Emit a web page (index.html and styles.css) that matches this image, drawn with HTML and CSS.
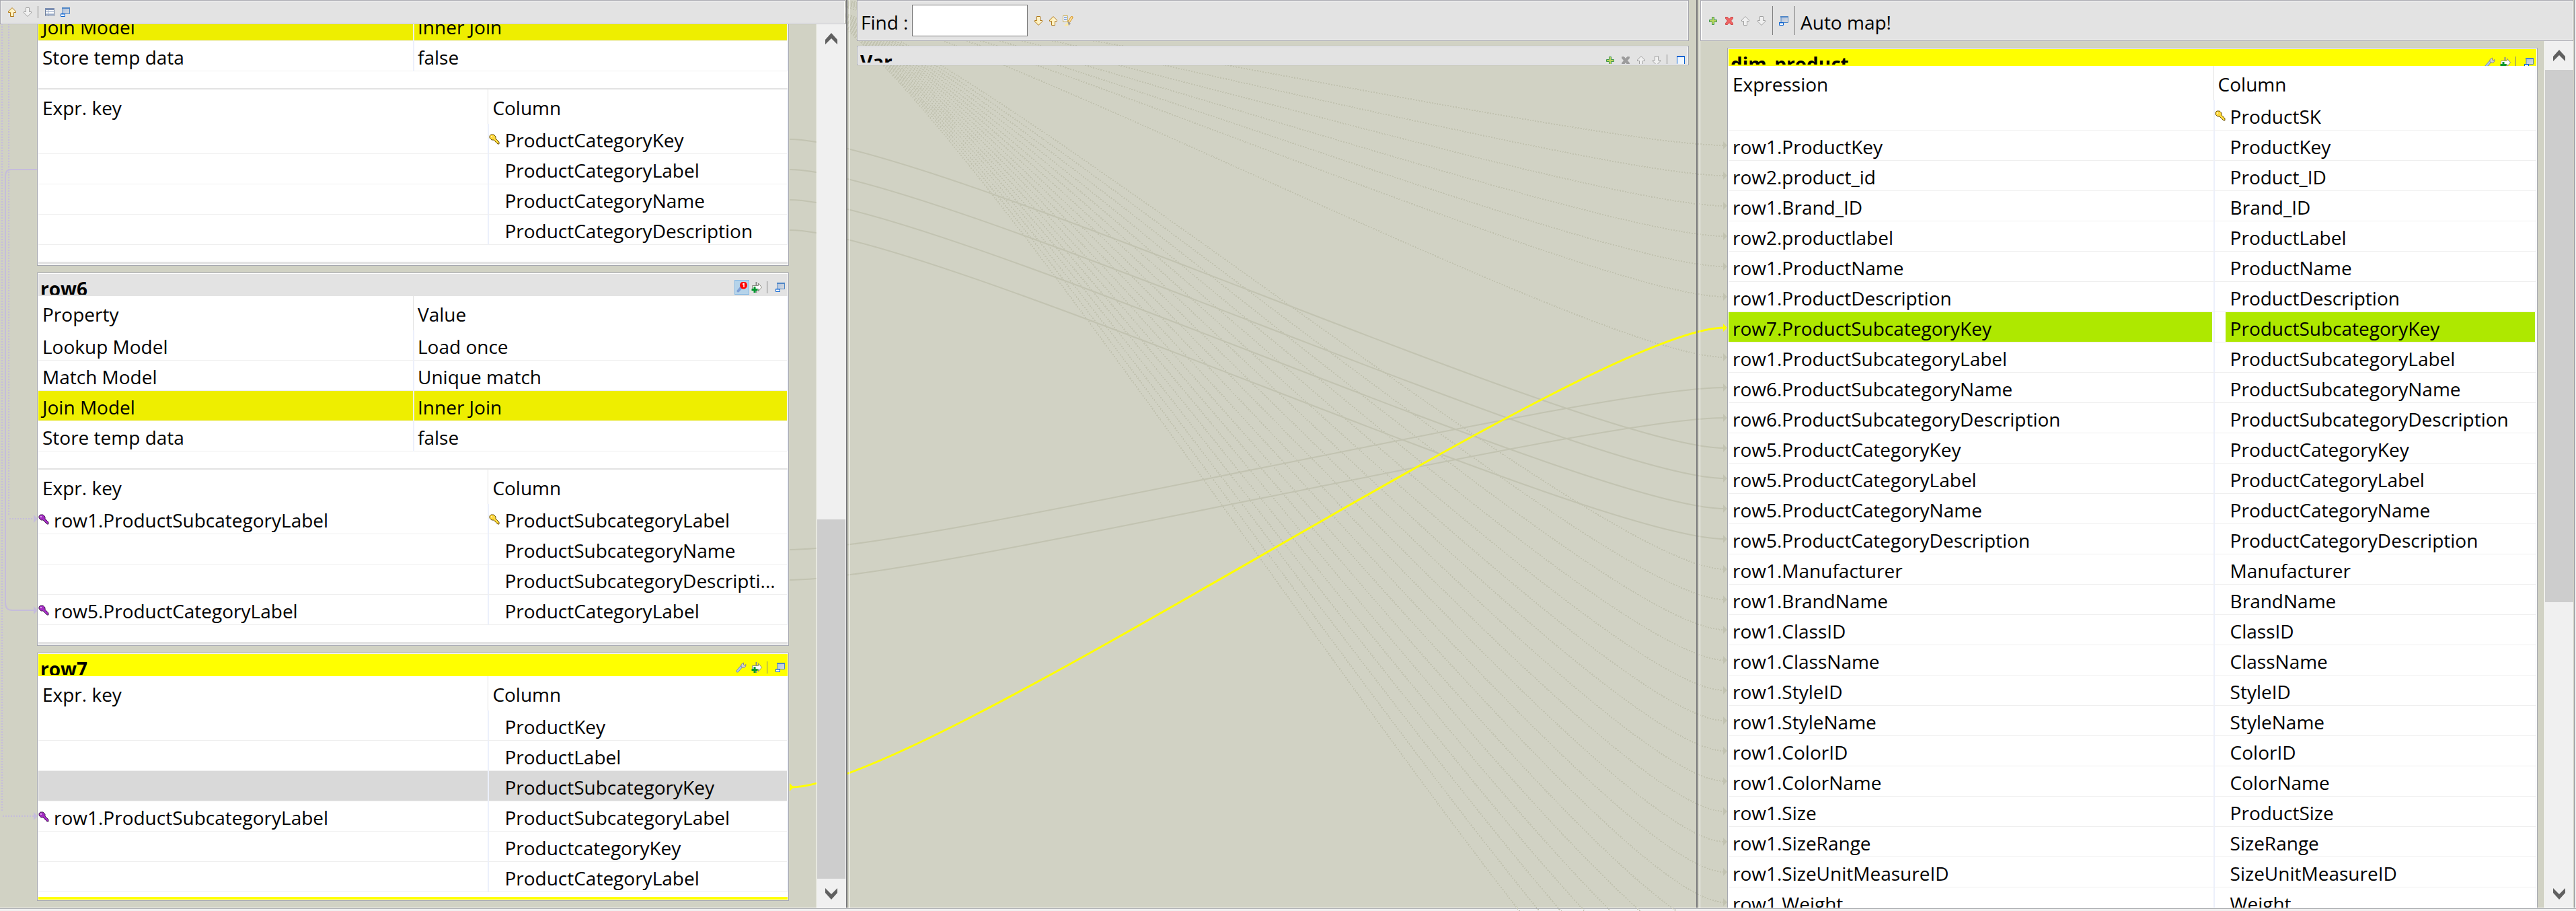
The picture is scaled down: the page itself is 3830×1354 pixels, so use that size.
FILE: index.html
```html
<!DOCTYPE html>
<html lang="en">
<head>
<meta charset="utf-8">
<title>Map editor</title>
<link rel="stylesheet" href="styles.css">
</head>
<body>
<svg class="symbols" aria-hidden="true">
  <linearGradient id="gold" x1="0" y1="0" x2="1" y2="0"><stop offset="0" stop-color="#ffe9a0"/><stop offset="1" stop-color="#fffbe8"/></linearGradient>
  <linearGradient id="glass" x1="0" y1="0" x2="1" y2="1"><stop offset="0" stop-color="#a9bfe0"/><stop offset="1" stop-color="#dcdcdc"/></linearGradient>
  <symbol id="up" viewBox="0 0 16 16"><path d="M8 1.500 13.500 7v1.500H10.500v6h-5v-6H2.500V7z"/></symbol>
  <symbol id="down" viewBox="0 0 16 16"><path d="M8 14.500 13.500 9V7.500H10.500v-6h-5v6H2.500V9z"/></symbol>
  <symbol id="sheet" viewBox="0 0 16 16"><path d="M1.500 2.500h13v11h-13z" fill="#fff" stroke="#6b7d9c"/><path d="M1 2h14v3H1z" fill="#7c8fb2"/><path d="M2 7.500h12M2 9.500h12M2 11.500h12M5.500 5v8" stroke="#9aabc8"/></symbol>
  <symbol id="restore" viewBox="0 0 16 16"><path d="M4 1.500h10.500v9H4z" fill="url(#glass)" stroke="#4f86c6"/><path d="M3 2h12" stroke="#4f86c6" stroke-width="2"/><path d="M1.500 10.500h6v4h-6z" fill="#fff" stroke="#0a62d0"/><path d="M1 11h7" stroke="#0a62d0"/></symbol>
  <symbol id="window" viewBox="0 0 16 16"><path d="M3.500 1.500h11v13H1.500l2-2z" fill="#eef6ff" stroke="#0a62d0"/><path d="M3 2h12" stroke="#0a62d0" stroke-width="2"/></symbol>
  <symbol id="plus" viewBox="0 0 16 16"><path d="M6.500 2.500h3v4h4v3h-4v4h-3v-4h-4v-3h4z" fill="#b9d65c" stroke="#3f9450"/></symbol>
  <symbol id="cross" viewBox="0 0 16 16"><path d="M2.500 2.500h3L8 5.500l2.500-3h3v2L10.500 8l3 3.500v2h-3L8 10.500l-2.500 3h-3v-2l3-3.500-3-3.500z"/></symbol>
  <symbol id="wrench" viewBox="0 0 16 16"><path d="m2.500 13.500 6-7" stroke="#6f8fca" stroke-width="4" stroke-linecap="round"/><path d="m2.500 13.500 6-7" stroke="#b5c9ee" stroke-width="2" stroke-linecap="round"/><path d="M8 7V3.500L11.500 1v3l1.500 1 2-1.500-.5 3L12 8.500z" fill="#d0d0d0" stroke="#8a8a8a"/></symbol>
  <symbol id="join" viewBox="0 0 16 16"><path d="M7.500 0v16" stroke="#8c8c8c" stroke-width="2"/><path d="M1.500 5.500h9V2l5 6-5 6v-3.500h-9z" fill="#fff" stroke="#8a8a80"/><path d="M5 7v9M.5 11.500h9" stroke="#00962e" stroke-width="3"/></symbol>
  <symbol id="once" viewBox="0 0 16 16"><path d="m2.500 13.500 6-7" stroke="#7d9fd6" stroke-width="4" stroke-linecap="round"/><circle cx="10.500" cy="5" r="5.500" fill="#f00"/><path d="m9 3.500 2-1V8" fill="none" stroke="#fff" stroke-width="1.500"/></symbol>
  <symbol id="report" viewBox="0 0 16 16"><path d="M2 15.500 8 10l2 1.500-2 4z" fill="#ffe9a0"/><path d="m13.500 3-4 6" stroke="#d99a2b" stroke-width="4" stroke-linecap="round"/><path d="m13.500 3-4 6" stroke="#ffe3a3" stroke-width="2" stroke-linecap="round"/><path d="m7 8 5 4-3 3z" fill="#9a9a9a"/><path d="M.5.5h7v9h-7z" fill="#eef4ff" stroke="#c9a94a"/><path d="M2 3h4M2 5.500h4" stroke="#3b6fc4"/></symbol>
  <symbol id="key" viewBox="0 0 16 16"><path d="M3 1h4l3 3v3l5 5v3h-2l-6-6H4L1 6V3z"/><path d="M3 3h2v2H3z" fill="#fff" fill-opacity=".6" stroke="none"/></symbol>
  <symbol id="chevron" viewBox="0 0 18 18"><path d="M9 0 18 10v7L9 8 0 17v-7z" fill="#606060"/></symbol>
</svg>

<main class="editor">
  <svg class="links" viewBox="0 0 3830 1354" preserveAspectRatio="none" aria-hidden="true">
    <g class="lookup">
      <path class="dots" d="M3 35V1206M4 1213H50M13 35V767M14 771H50"/>
      <path d="M56 252H16Q8 252 8 262V896Q8 907 18 907H50"/>
      <path class="head" d="m50 765 6 6-6 6zM50 901l6 6-6 6zM50 1207l6 6-6 6z"/>
    </g>
    <g class="link" id="flows"></g>
    <path class="active" d="M1176 1170C1373 1170 2368 487 2564 487"/>
    <path class="active-head" d="m1174 1164 6 6-6 6zM2562 481l6 6-6 6z"/>
  </svg>

  <section class="panel inputs">
    <header class="toolbar slim">
      <button aria-label="Move up"><svg class="icon gold"><use href="#up"/></svg></button>
      <button aria-label="Move down"><svg class="icon grey"><use href="#down"/></svg></button>
      <i class="sep"></i>
      <button aria-label="Schema"><svg class="icon"><use href="#sheet"/></svg></button>
      <button aria-label="Minimize all"><svg class="icon"><use href="#restore"/></svg></button>
    </header>
    <div class="body">
      <div class="stack">
        <article class="box">
          <table class="props">
            <tr class="on"><td>Join Model</td><td>Inner Join</td></tr>
            <tr><td>Store temp data</td><td>false</td></tr>
          </table>
          <table class="cols split">
            <tr><th>Expr. key</th><th>Column</th></tr>
            <tr><td></td><td class="name"><svg class="key primary"><use href="#key"/></svg>ProductCategoryKey</td></tr>
            <tr><td></td><td class="name">ProductCategoryLabel</td></tr>
            <tr><td></td><td class="name">ProductCategoryName</td></tr>
            <tr><td></td><td class="name">ProductCategoryDescription</td></tr>
          </table>
          <div class="foot"></div>
        </article>

        <article class="box">
          <header class="bar">
            <h2>row6</h2>
            <button class="pressed" aria-label="Match settings"><svg class="icon"><use href="#once"/></svg></button>
            <button aria-label="Join"><svg class="icon"><use href="#join"/></svg></button>
            <i class="sep"></i>
            <button aria-label="Minimize"><svg class="icon"><use href="#restore"/></svg></button>
          </header>
          <table class="props">
            <tr><th>Property</th><th>Value</th></tr>
            <tr><td>Lookup Model</td><td>Load once</td></tr>
            <tr><td>Match Model</td><td>Unique match</td></tr>
            <tr class="on"><td>Join Model</td><td>Inner Join</td></tr>
            <tr><td>Store temp data</td><td>false</td></tr>
          </table>
          <table class="cols split">
            <tr><th>Expr. key</th><th>Column</th></tr>
            <tr><td class="name"><svg class="key foreign"><use href="#key"/></svg>row1.ProductSubcategoryLabel</td><td class="name"><svg class="key primary"><use href="#key"/></svg>ProductSubcategoryLabel</td></tr>
            <tr><td></td><td class="name">ProductSubcategoryName</td></tr>
            <tr><td></td><td class="name">ProductSubcategoryDescripti...</td></tr>
            <tr><td class="name"><svg class="key foreign"><use href="#key"/></svg>row5.ProductCategoryLabel</td><td class="name">ProductCategoryLabel</td></tr>
          </table>
          <div class="foot"></div>
        </article>

        <article class="box active-box">
          <header class="bar">
            <h2>row7</h2>
            <button aria-label="Settings"><svg class="icon"><use href="#wrench"/></svg></button>
            <button aria-label="Join"><svg class="icon"><use href="#join"/></svg></button>
            <i class="sep"></i>
            <button aria-label="Minimize"><svg class="icon"><use href="#restore"/></svg></button>
          </header>
          <table class="cols">
            <tr><th>Expr. key</th><th>Column</th></tr>
            <tr><td></td><td class="name">ProductKey</td></tr>
            <tr><td></td><td class="name">ProductLabel</td></tr>
            <tr class="picked"><td></td><td class="name">ProductSubcategoryKey</td></tr>
            <tr><td class="name"><svg class="key foreign"><use href="#key"/></svg>row1.ProductSubcategoryLabel</td><td class="name">ProductSubcategoryLabel</td></tr>
            <tr><td></td><td class="name">ProductcategoryKey</td></tr>
            <tr><td></td><td class="name">ProductCategoryLabel</td></tr>
          </table>
          <div class="foot"></div>
        </article>
      </div>
      <div class="scroll low">
        <button aria-label="Scroll up"><svg><use href="#chevron"/></svg></button>
        <div class="before"></div><div class="thumb"></div><div class="after"></div>
        <button class="flip" aria-label="Scroll down"><svg><use href="#chevron"/></svg></button>
      </div>
    </div>
  </section>

  <div class="sash"></div>

  <section class="panel vars">
    <header class="toolbar">
      <label for="find">Find :</label>
      <input id="find" type="text">
      <button aria-label="Find next"><svg class="icon gold"><use href="#down"/></svg></button>
      <button aria-label="Find previous"><svg class="icon gold"><use href="#up"/></svg></button>
      <button aria-label="Highlight"><svg class="icon"><use href="#report"/></svg></button>
    </header>
    <article class="box var-box">
      <header class="bar">
        <h2>Var</h2>
        <button aria-label="Add"><svg class="icon"><use href="#plus"/></svg></button>
        <button aria-label="Remove"><svg class="icon off"><use href="#cross"/></svg></button>
        <button aria-label="Move up"><svg class="icon grey"><use href="#up"/></svg></button>
        <button aria-label="Move down"><svg class="icon grey"><use href="#down"/></svg></button>
        <i class="sep"></i>
        <button aria-label="Restore"><svg class="icon"><use href="#window"/></svg></button>
      </header>
    </article>
  </section>

  <div class="sash"></div>

  <section class="panel outputs">
    <header class="toolbar">
      <button aria-label="Add output"><svg class="icon"><use href="#plus"/></svg></button>
      <button aria-label="Remove output"><svg class="icon red"><use href="#cross"/></svg></button>
      <button aria-label="Move up"><svg class="icon grey"><use href="#up"/></svg></button>
      <button aria-label="Move down"><svg class="icon grey"><use href="#down"/></svg></button>
      <i class="sep"></i>
      <button aria-label="Minimize all"><svg class="icon"><use href="#restore"/></svg></button>
      <i class="sep"></i>
      <button class="text">Auto map!</button>
    </header>
    <div class="body">
      <div class="stack">
        <article class="box active-box">
          <header class="bar">
            <h2>dim_product</h2>
            <button aria-label="Settings"><svg class="icon"><use href="#wrench"/></svg></button>
            <button aria-label="Join"><svg class="icon"><use href="#join"/></svg></button>
            <i class="sep"></i>
            <button aria-label="Minimize"><svg class="icon"><use href="#restore"/></svg></button>
          </header>
          <table class="cols">
            <tr><th>Expression</th><th>Column</th></tr>
            <tr><td></td><td class="name"><svg class="key primary"><use href="#key"/></svg>ProductSK</td></tr>
            <tr><td>row1.ProductKey</td><td class="name">ProductKey</td></tr>
            <tr><td>row2.product_id</td><td class="name">Product_ID</td></tr>
            <tr><td>row1.Brand_ID</td><td class="name">Brand_ID</td></tr>
            <tr><td>row2.productlabel</td><td class="name">ProductLabel</td></tr>
            <tr><td>row1.ProductName</td><td class="name">ProductName</td></tr>
            <tr><td>row1.ProductDescription</td><td class="name">ProductDescription</td></tr>
            <tr class="mapped"><td>row7.ProductSubcategoryKey</td><td class="name">ProductSubcategoryKey</td></tr>
            <tr><td>row1.ProductSubcategoryLabel</td><td class="name">ProductSubcategoryLabel</td></tr>
            <tr><td>row6.ProductSubcategoryName</td><td class="name">ProductSubcategoryName</td></tr>
            <tr><td>row6.ProductSubcategoryDescription</td><td class="name">ProductSubcategoryDescription</td></tr>
            <tr><td>row5.ProductCategoryKey</td><td class="name">ProductCategoryKey</td></tr>
            <tr><td>row5.ProductCategoryLabel</td><td class="name">ProductCategoryLabel</td></tr>
            <tr><td>row5.ProductCategoryName</td><td class="name">ProductCategoryName</td></tr>
            <tr><td>row5.ProductCategoryDescription</td><td class="name">ProductCategoryDescription</td></tr>
            <tr><td>row1.Manufacturer</td><td class="name">Manufacturer</td></tr>
            <tr><td>row1.BrandName</td><td class="name">BrandName</td></tr>
            <tr><td>row1.ClassID</td><td class="name">ClassID</td></tr>
            <tr><td>row1.ClassName</td><td class="name">ClassName</td></tr>
            <tr><td>row1.StyleID</td><td class="name">StyleID</td></tr>
            <tr><td>row1.StyleName</td><td class="name">StyleName</td></tr>
            <tr><td>row1.ColorID</td><td class="name">ColorID</td></tr>
            <tr><td>row1.ColorName</td><td class="name">ColorName</td></tr>
            <tr><td>row1.Size</td><td class="name">ProductSize</td></tr>
            <tr><td>row1.SizeRange</td><td class="name">SizeRange</td></tr>
            <tr><td>row1.SizeUnitMeasureID</td><td class="name">SizeUnitMeasureID</td></tr>
            <tr><td>row1.Weight</td><td class="name">Weight</td></tr>
          </table>
        </article>
      </div>
      <div class="scroll high">
        <button aria-label="Scroll up"><svg><use href="#chevron"/></svg></button>
        <div class="before"></div><div class="thumb"></div><div class="after"></div>
        <button class="flip" aria-label="Scroll down"><svg><use href="#chevron"/></svg></button>
      </div>
    </div>
  </section>
</main>
<script src="links.js"></script>
</body>
</html>
```
FILE: links.js
```js
// Draws one curve per mapping, from a source column to an output row.
const LEFT = 1174, RIGHT = 2568, REACH = 200;
const rowY = n => 171 + 45 * (n - 1);
const group = document.getElementById('flows');

function link(from, row, dotted) {
  const to = rowY(row);
  const curve = `M${LEFT} ${from}C${LEFT + REACH} ${from} ${RIGHT - REACH} ${to} ${RIGHT - 4} ${to}`;
  const head = `M${RIGHT - 6} ${to - 6}l6 6-6 6z`;
  group.insertAdjacentHTML('beforeend',
    `<path class="${dotted ? 'dots' : ''}" d="${curve}"/><path class="head" d="${head}"/>`);
}

// Sources scrolled out of view share one anchor above the panel.
[2, 3, 4, 5, 6, 7, 9].forEach(row => link(-5, row, true));
for (let row = 16; row <= 34; row++) link(-5, row, true);

[[207, 12], [252, 13], [297, 14], [342, 15], [817, 10], [862, 11]]
  .forEach(([y, row]) => link(y, row, false));
```
FILE: styles.css
```css
* { box-sizing: border-box; }

body {
  margin: 0;
  height: 100vh;
  display: flex;
  flex-direction: column;
  overflow: hidden;
  background: #d1d2c4;
  color: #000;
  font: 28px/40px "Open Sans", "Noto Sans", sans-serif;
}

body::after {
  content: "";
  height: 4px;
  flex: none;
  border-top: 1px solid #fff;
  background: linear-gradient(#a6a8ac 1px, #f0f0f0 1px);
}

.symbols { position: absolute; width: 0; height: 0; }

.editor {
  position: relative;
  flex: 1;
  min-height: 0;
  display: grid;
  grid-template-columns: 1258fr 6px 1258fr 6px 1301fr;
  grid-template-rows: minmax(0, 1fr);
  border-right: 1px solid #fff;
  box-shadow: inset -2px 0 #a6a8ac;
}

.links {
  position: absolute;
  left: 0;
  top: 0;
  width: 100vw;
  height: 100vh;
  fill: none;
}
.link { stroke: #c2c3b1; stroke-width: 2; }
.lookup { stroke: #c5bcdc; stroke-width: 2; }
.dots { stroke-dasharray: 2 2; shape-rendering: crispEdges; }
.link .head { fill: #c2c3b1; stroke: none; }
.lookup .head { fill: #c5bcdc; stroke: none; }
.active { stroke: #ff0; stroke-width: 3; }
.active-head { fill: #ff0; }

.panel {
  position: relative;
  min-width: 0;
  display: flex;
  flex-direction: column;
}

.sash {
  position: relative;
  border-left: 2px solid #77777a;
  border-right: 1px solid #fff;
}

.toolbar {
  flex: none;
  display: flex;
  align-items: center;
  height: 61px;
  border: 1px solid #a6a6ad;
  box-shadow: inset 0 0 0 1px #fff;
  background: #e3e3e3;
}

button {
  flex: none;
  display: block;
  padding: 0;
  border: 0;
  background: none;
  color: inherit;
  font: inherit;
}

.icon { display: block; width: 16px; height: 16px; }
.gold { fill: url(#gold); stroke: #b07818; }
.grey { fill: #f0f0f0; stroke: #a0a0a0; }
.red { fill: #f06464; stroke: #cc4a4a; }
.off { fill: #9c9c9c; stroke: #9c9c9c; }

.sep { flex: none; width: 1px; height: 18px; background: #808080; }

.slim { height: 36px; margin-right: 1px; padding-left: 9px; gap: 7px; }
.slim .sep { margin-right: 2px; }

.vars { padding: 0 11px 0 10px; }
.vars .toolbar { gap: 6px; padding-left: 5px; }
.vars input {
  width: 172px;
  height: 47px;
  margin-right: 2px;
  border: 1px solid #7a7a7a;
  background: #fff;
  font: inherit;
}
.vars label, .text { padding-top: 4px; }

.outputs { padding-right: 3px; }
.outputs .toolbar { gap: 8px; padding-left: 10px; }
.outputs .toolbar .sep { height: 43px; }

.body { flex: 1; min-height: 0; display: flex; }

.stack {
  flex: 1;
  min-width: 0;
  display: flex;
  flex-direction: column;
  gap: 10px;
  overflow: hidden;
}
.inputs .stack { justify-content: flex-end; padding: 0 41px 10px 55px; }
.outputs .stack { padding: 10px 10px 0 40px; }

.box {
  flex: none;
  border: 1px solid #a6a8b0;
  padding: 1px;
  background: #fff;
}

.bar {
  display: flex;
  align-items: flex-start;
  gap: 7px;
  height: 33px;
  padding: 0 3px 0 3px;
  background: #e3e3e3;
}
.bar h2 {
  flex: 1;
  height: 31px;
  margin: 0;
  padding-top: 2px;
  overflow: hidden;
  font-size: 28px;
}
.bar button { margin-top: 12px; }
.bar .sep { margin-top: 11px; }
.bar .sep + button { margin-left: 4px; }
.bar .pressed {
  margin: 9px -4px 0 0;
  padding: 2px;
  border: 1px solid #84b8e4;
  background: #b5d3ea;
}
.active-box .bar, .active-box .foot { background: #ff0; }
.outputs .bar { height: 25px; overflow: hidden; }
.outputs .bar h2, .var-box h2 { height: 23px; }

.var-box { margin-top: 7px; }
.var-box .bar { height: 25px; overflow: hidden; }

table {
  width: 100%;
  table-layout: fixed;
  border-collapse: separate;
  border-spacing: 0;
}
th, td {
  padding: 4px 0 0 6px;
  text-align: left;
  vertical-align: top;
  white-space: nowrap;
  font-weight: 400;
}
th { height: 51px; padding-top: 7px; }
td { height: 45px; border-bottom: 1px solid #efefef; }
tr > :first-child { width: 60%; }
.props tr > :first-child { width: 50%; }
th + th { border-left: 1px solid #e2e2e2; }
td + td { border-left: 2px solid #ecf0fb; }
.props td + td { padding-left: 5px; }
td.name { padding-left: 23px; }
tr > :last-child { border-right: 1px solid #ecf0fb; }

.props { padding-bottom: 25px; border-bottom: 2px solid #e2e2e2; }
.cols { padding-bottom: 7px; }
.cols.split { padding-bottom: 25px; }
.foot { height: 4px; background: #e3e3e3; }

.on td { background: #ee0 padding-box; }
.picked td { background: #d9d9d9; }
.mapped td { background: #aee800 padding-box; border-right: 2px solid #fff; }
.mapped td.name { background: linear-gradient(#aee800, #aee800) 16px 0 no-repeat padding-box; }

.key {
  float: left;
  width: 16px;
  height: 16px;
  margin: 11px 0 0 -23px;
}
.primary { fill: #ffd83c; stroke: #6b5310; }
.foreign { fill: #a42cc4; stroke: #4a2a55; }

.scroll {
  flex: none;
  display: flex;
  flex-direction: column;
  width: 43px;
  border-left: 1px solid #fff;
  background: #f0f0f0;
}
.inputs .scroll { border-right: 1px solid #f0f0f0; width: 44px; }
.scroll button { display: grid; place-items: center; height: 43px; }
.scroll svg { width: 18px; height: 18px; }
.flip svg { transform: rotate(180deg); }
.thumb { background: #cdcdcd; }
.low .before { flex: 695; }
.low .thumb { flex: 535; }
.high .thumb { flex: 792; }
.high .after { flex: 411; }
```
